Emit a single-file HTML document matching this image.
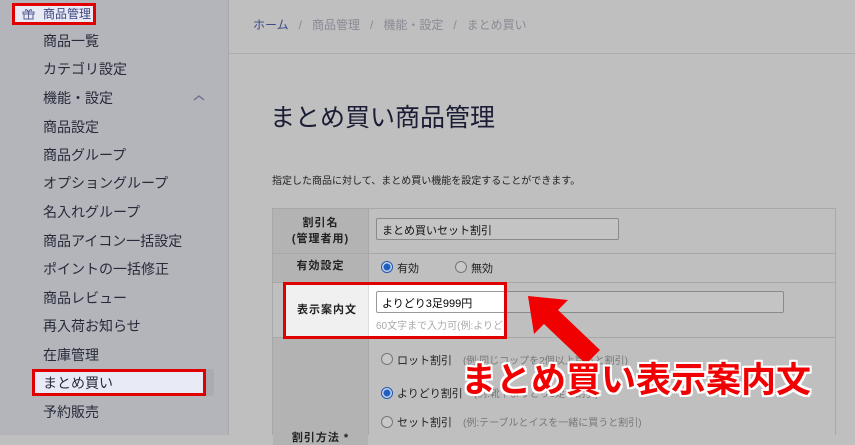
<!DOCTYPE html>
<html><head><meta charset="utf-8"><style>
*{margin:0;padding:0;box-sizing:border-box}
body{width:855px;height:435px;overflow:hidden;background:#bfbfbf;font-family:"Liberation Sans","Noto Sans CJK JP",sans-serif;position:relative}
.side{position:absolute;left:0;top:0;width:229px;height:435px;background:#b4b5ba;border-right:1px solid #a9aab0}
.si{position:absolute;left:43px;font-size:14px;color:#272a3a}
.abs{position:absolute}
.lab{position:absolute;background:#b3b3b3;font-size:11px;font-weight:bold;color:#222;text-align:center;letter-spacing:1px}
.inp{position:absolute;background:#c4c4c4;border:1px solid #8a8a8a;border-radius:2px;font-size:11px;color:#111;padding:3px 5px}
.radio{position:absolute;width:12px;height:12px;border-radius:50%;border:1px solid #777;background:#c8c8c8}
.radio.on{border-color:#2255aa;background:radial-gradient(circle,#1f5fc0 3px,#cfd8ee 4px)}
.t{position:absolute;font-size:11px;color:#222;white-space:nowrap}
.g{color:#777}
</style></head><body>
<div class="side">
 <div class="abs" style="left:12px;top:3px;width:84px;height:22px;background:#e8eaf6;border:3px solid #e00000"></div>
 <svg class="abs" style="left:22px;top:8px" width="13" height="12" viewBox="0 0 13 12"><path d="M1 4h11v2H1zM2 6v5h9V6M6.5 4v7M6.5 4C5 1 3 1 3.5 3M6.5 4C8 1 10 1 9.5 3" fill="none" stroke="#5a5f90" stroke-width="1"/></svg>
 <div class="abs" style="left:43px;top:5px;font-size:12px;color:#3f4580">商品管理</div>
 <div class="si" style="top:31px">商品一覧</div>
 <div class="si" style="top:59px">カテゴリ設定</div>
 <div class="si" style="top:88px">機能・設定</div>
 <svg class="abs" style="left:193px;top:94px" width="12" height="8"><path d="M1 6l5-4 5 4" fill="none" stroke="#6a6f8a" stroke-width="1.3"/></svg>
 <div class="si" style="top:117px">商品設定</div>
 <div class="si" style="top:145px">商品グループ</div>
 <div class="si" style="top:173px">オプショングループ</div>
 <div class="si" style="top:202px">名入れグループ</div>
 <div class="si" style="top:231px">商品アイコン一括設定</div>
 <div class="si" style="top:259px">ポイントの一括修正</div>
 <div class="si" style="top:288px">商品レビュー</div>
 <div class="si" style="top:316px">再入荷お知らせ</div>
 <div class="si" style="top:345px">在庫管理</div>
 <div class="abs" style="left:32px;top:369px;width:182px;height:27px;background:#a9abb3;border-radius:3px"></div>
 <div class="abs" style="left:32px;top:369px;width:174px;height:27px;background:#e8eaf6;border:3px solid #e00000"></div>
 <div class="si" style="top:373px">まとめ買い</div>
 <div class="si" style="top:402px">予約販売</div>
</div>
<div class="abs" style="left:253px;top:16px;font-size:12px;color:#8a8a95;white-space:nowrap"><span style="color:#3d4a8a">ホーム</span>&nbsp;&nbsp;&nbsp;/&nbsp;&nbsp;&nbsp;商品管理&nbsp;&nbsp;&nbsp;/&nbsp;&nbsp;&nbsp;機能・設定&nbsp;&nbsp;&nbsp;/&nbsp;&nbsp;&nbsp;まとめ買い</div>
<div class="abs" style="left:229px;top:53px;width:626px;height:1px;background:#aaacb4"></div>
<div class="abs" style="left:270px;top:98px;font-size:25px;color:#1a1d35">まとめ買い商品管理</div>
<div class="t" style="left:272px;top:172px;font-size:10px">指定した商品に対して、まとめ買い機能を設定することができます。</div>
<div class="abs" style="left:272px;top:208px;width:564px;height:227px;border:1px solid #a8a8a8;border-bottom:none"></div>
<div class="lab" style="left:273px;top:209px;width:95px;height:44px;padding-top:6px;line-height:16px">割引名<br>(管理者用)</div>
<div class="lab" style="left:273px;top:254px;width:95px;height:28px;line-height:24px">有効設定</div>
<div class="lab" style="left:273px;top:338px;width:95px;height:97px"></div>
<div class="lab" style="left:273px;top:431px;width:95px;line-height:14px">割引方法 *</div>
<div class="abs" style="left:272px;top:253px;width:564px;height:1px;background:#a8a8a8"></div>
<div class="abs" style="left:272px;top:282px;width:564px;height:1px;background:#a8a8a8"></div>
<div class="abs" style="left:272px;top:337px;width:564px;height:1px;background:#a8a8a8"></div>
<div class="abs" style="left:368px;top:208px;width:1px;height:227px;background:#a8a8a8"></div>
<div class="inp" style="left:376px;top:218px;width:243px;height:22px">まとめ買いセット割引</div>
<div class="radio on" style="left:381px;top:261px"></div><div class="t" style="left:397px;top:260px">有効</div>
<div class="radio" style="left:455px;top:261px"></div><div class="t" style="left:471px;top:260px">無効</div>
<div class="inp" style="left:376px;top:291px;width:408px;height:22px"></div>
<div class="radio" style="left:381px;top:353px"></div><div class="t" style="left:397px;top:352px">ロット割引　<span class="g" style="font-size:10px">(例:同じコップを2個以上買うと割引)</span></div>
<div class="radio on" style="left:381px;top:387px"></div><div class="t" style="left:397px;top:385px">よりどり割引　<span class="g" style="font-size:10px">(例:靴下よりどり3足で割引)</span></div>
<div class="radio" style="left:381px;top:416px"></div><div class="t" style="left:397px;top:414px">セット割引　<span class="g" style="font-size:10px">(例:テーブルとイスを一緒に買うと割引)</span></div>
<div class="abs" style="left:283px;top:282px;width:224px;height:57px;border:3px solid #e00000;background:#fff;overflow:hidden">
 <div class="abs" style="left:0;top:0;width:82px;height:51px;background:#f0f0f0;font-size:11px;font-weight:bold;color:#222;line-height:51px;text-align:center;letter-spacing:1px">表示案内文</div>
 <div class="abs" style="left:82px;top:0;width:1px;height:51px;background:#ddd"></div>
 <div class="abs" style="left:90px;top:6px;width:140px;height:22px;border:1px solid #999;border-right:none;border-radius:2px 0 0 2px;font-size:11px;padding:3px 5px">よりどり3足999円</div>
 <div class="abs g" style="left:90px;top:32px;font-size:10px;white-space:nowrap;color:#aaa">60文字まで入力可(例:よりどり3点で</div>
</div>
<svg class="abs" style="left:520px;top:290px" width="90" height="80" viewBox="0 0 90 80"><polygon points="8,6 48,10 38,20 80,60 66,74 24,34 14,44" fill="#f00000"/></svg>
<div class="abs" style="left:461px;top:352px;font-size:35px;font-weight:bold;color:#f00000;white-space:nowrap;text-shadow:2px 0 #fff,-2px 0 #fff,0 2px #fff,0 -2px #fff,2px 2px #fff,-2px -2px #fff,2px -2px #fff,-2px 2px #fff">まとめ買い表示案内文</div>
</body></html>
